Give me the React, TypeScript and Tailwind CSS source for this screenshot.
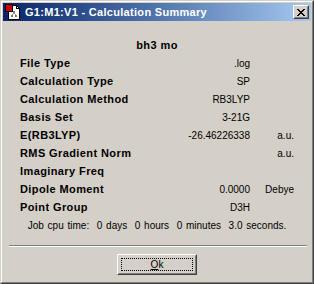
import React from "react";

const rows: { label: string; value: string; unit: string }[] = [
  { label: "File Type", value: ".log", unit: "" },
  { label: "Calculation Type", value: "SP", unit: "" },
  { label: "Calculation Method", value: "RB3LYP", unit: "" },
  { label: "Basis Set", value: "3-21G", unit: "" },
  { label: "E(RB3LYP)", value: "-26.46226338", unit: "a.u." },
  { label: "RMS Gradient Norm", value: "", unit: "a.u." },
  { label: "Imaginary Freq", value: "", unit: "" },
  { label: "Dipole Moment", value: "0.0000", unit: "Debye" },
  { label: "Point Group", value: "D3H", unit: "" },
];

function TitleIcon() {
  return (
    <svg width="16" height="16" viewBox="0 0 16 16" shapeRendering="crispEdges">
      <path d="M3 1h8l3 3v11H3z" fill="#ffffff" stroke="#000000" strokeWidth="1" />
      <path d="M11 1v3h3" fill="none" stroke="#000000" strokeWidth="1" />
      <rect x="0" y="0" width="7" height="7" fill="#cc0000" stroke="#000" strokeWidth="1" />
      <rect x="8" y="7" width="2" height="2" fill="#7a7a7a" />
      <rect x="6" y="11" width="2" height="2" fill="#7a7a7a" />
      <rect x="10" y="11" width="2" height="2" fill="#7a7a7a" />
      <path d="M9 9L7 11M9 9l2 2" stroke="#9a9a9a" strokeWidth="1" />
    </svg>
  );
}

function CloseGlyph() {
  return (
    <svg width="8" height="7" viewBox="0 0 8 7" shapeRendering="crispEdges">
      <path
        d="M0 0h2v1h1v1h2V1h1V0h2v1H7v1H6v1H5v1h1v1h1v1h1v1H6V6H5V5H3v1H2v1H0V6h1V5h1V4h1V3H2V2H1V1H0z"
        fill="#000"
      />
    </svg>
  );
}

export default function App() {
  const sans = { fontFamily: '"Liberation Sans", Arial, sans-serif' };
  return (
    <div className="w-[314px] h-[284px] border border-t-[#d4d0c8] border-l-[#d4d0c8] border-b-[#404040] border-r-[#404040] bg-[#d4d0c8]" style={sans}>
      <div className="w-full h-full border border-t-white border-l-white border-b-[#808080] border-r-[#808080] p-px flex flex-col">
        {/* title bar */}
        <div className="h-[18px] flex items-center bg-gradient-to-r from-[#0a246a] to-[#a6caf0] pl-[1px] pr-[2px] shrink-0">
          <div className="w-[16px] h-[16px] ml-px">
            <TitleIcon />
          </div>
          <span className="ml-[4px] text-white font-bold text-[11px] leading-none tracking-[0.3px]">
            G1:M1:V1 - Calculation Summary
          </span>
          <div className="ml-auto w-[16px] h-[14px] bg-[#d4d0c8] border border-t-white border-l-white border-b-[#404040] border-r-[#404040]">
            <div className="w-full h-full border border-t-[#d4d0c8] border-l-[#d4d0c8] border-b-[#808080] border-r-[#808080] flex items-center justify-center">
              <CloseGlyph />
            </div>
          </div>
        </div>
        {/* client */}
        <div className="flex-1 flex flex-col mt-px pt-[14px] text-black">
          <div className="h-[18px] flex items-center justify-center font-bold text-[11px] tracking-[0.4px]">bh3 mo</div>
          <div className="flex flex-col pl-[17px] pr-[17px]">
            {rows.map((r) => (
              <div key={r.label} className="h-[18px] flex items-center">
                <div className="flex-1 font-bold text-[11px] tracking-[0.4px]">{r.label}</div>
                <div className="w-[110px] text-right text-[10px]">{r.value}</div>
                <div className="w-[44px] text-right text-[10px]">{r.unit}</div>
              </div>
            ))}
          </div>
          <div className="h-[18px] flex items-center justify-center text-[10px] whitespace-pre [word-spacing:1px]">
            {"Job cpu time:  0 days  0 hours  0 minutes  3.0 seconds."}
          </div>
          <div className="mt-[11px] ml-[6px] mr-[4px] h-[2px] border-t border-t-[#808080] border-b border-b-white" />
          <div className="mt-[7px] flex justify-center">
            <div className="w-[80px] h-[21px] border border-t-white border-l-white border-b-[#404040] border-r-[#404040] bg-[#d4d0c8]">
              <div className="w-full h-full border border-t-[#d4d0c8] border-l-[#d4d0c8] border-b-[#808080] border-r-[#808080] p-[2px]">
                <div className="w-full h-full border border-dotted border-black flex items-center justify-center text-[10px]">
                  <span><span className="underline">O</span>k</span>
                </div>
              </div>
            </div>
          </div>
        </div>
      </div>
    </div>
  );
}
